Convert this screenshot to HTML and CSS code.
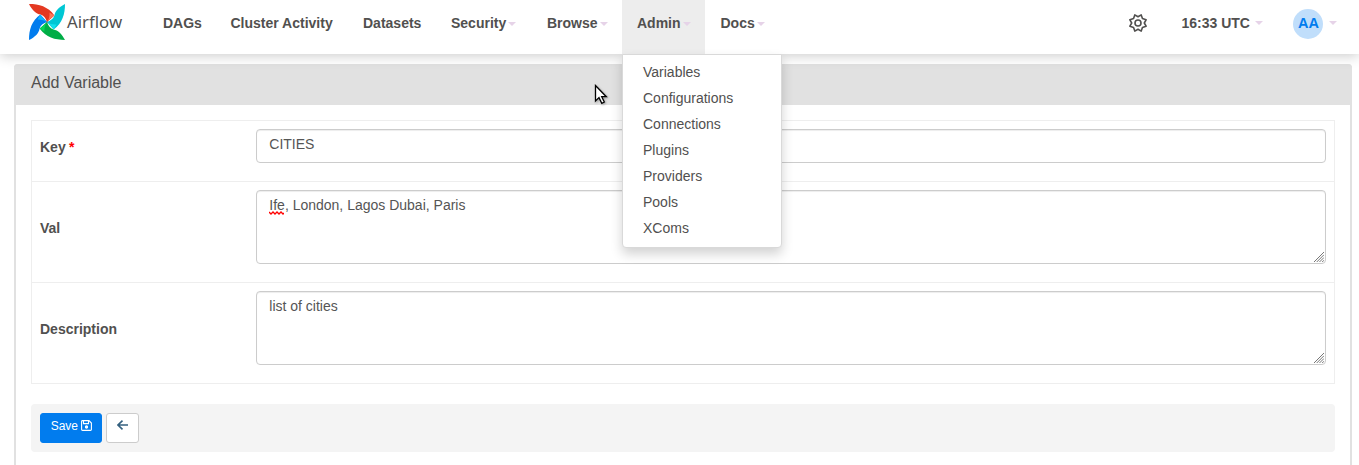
FILE: index.html
```html
<!DOCTYPE html>
<html lang="en">
<head>
<meta charset="utf-8">
<title>Airflow</title>
<link rel="stylesheet" href="styles.css">
</head>
<body>
<nav class="navbar">
  <a class="brand">
    <svg class="logo" viewBox="-18 -18 36 36">
      <path fill="#e43921" d="M-18-18C-8-18 1-15.500 7.400-6.600L0 0Q-2-6-6.400-7.400C-11-8-15-12-18-18Z"/>
      <path transform="rotate(90)" fill="#00c7d4" d="M-18-18C-8-18 1-15.500 7.400-6.600L0 0Q-2-6-6.400-7.400C-11-8-15-12-18-18Z"/>
      <path transform="rotate(180)" fill="#00ad46" d="M-18-18C-8-18 1-15.500 7.400-6.600L0 0Q-2-6-6.400-7.400C-11-8-15-12-18-18Z"/>
      <path transform="rotate(270)" fill="#017cee" d="M-18-18C-8-18 1-15.500 7.400-6.600L0 0Q-2-6-6.400-7.400C-11-8-15-12-18-18Z"/>
      <path fill="#ff7557" d="M0 0Q3-4 2.500-9.500L7.400-6.600Q3-4 0 0Z"/>
      <path transform="rotate(90)" fill="#11e1ee" d="M0 0Q3-4 2.500-9.500L7.400-6.600Q3-4 0 0Z"/>
      <path transform="rotate(180)" fill="#04d659" d="M0 0Q3-4 2.500-9.500L7.400-6.600Q3-4 0 0Z"/>
      <path transform="rotate(270)" fill="#0cb6ff" d="M0 0Q3-4 2.500-9.500L7.400-6.600Q3-4 0 0Z"/>
      <circle r=".7" fill="#51504f"/>
    </svg>
    <span class="brand-name">Airflow</span>
  </a>
  <a class="item dags">DAGs</a>
  <a class="item cluster">Cluster Activity</a>
  <a class="item datasets">Datasets</a>
  <a class="item security">Security<i class="caret"></i></a>
  <a class="item browse">Browse<i class="caret"></i></a>
  <div class="item admin">Admin<i class="caret"></i>
    <ul class="menu">
      <li>Variables</li><li>Configurations</li><li>Connections</li><li>Plugins</li><li>Providers</li><li>Pools</li><li>XComs</li>
    </ul>
  </div>
  <a class="item docs">Docs<i class="caret"></i></a>
  <div class="tools">
    <svg class="gear" viewBox="-9 -9 18 18" fill="none" stroke="#51504f" stroke-width="1.600" stroke-linejoin="round"><path d="M-3.200-8.100 0-6.300 3.200-8.100 4.450-4.450 8.100-3.200 6.300 0 8.100 3.200 4.450 4.450 3.200 8.100 0 6.300-3.200 8.100-4.450 4.450-8.100 3.200-6.300 0-8.100-3.200-4.450-4.450Z"/><circle r="3"/></svg>
    <span class="clock">16:33 UTC</span><i class="caret"></i>
    <span class="avatar">AA</span><i class="caret"></i>
  </div>
</nav>
<main class="panel">
  <h1 class="title">Add Variable</h1>
  <div class="content">
    <div class="form">
      <div class="row key"><label>Key <b class="required">*</b></label><div class="field">CITIES</div></div>
      <div class="row"><label>Val</label><div class="field area"><span class="misspelled">Ife<svg class="squiggle" viewBox="0 0 15 4"><path d="M0 1 2 3 4 1 6 3 8 1 10 3 12 1 14 3 15 2" fill="none" stroke="red" stroke-width="1.300"/></svg></span>, London, Lagos Dubai, Paris<svg class="grip" viewBox="0 0 11 11"><path d="M0 11 11 0M3 11 11 3M6 11 11 6M9 11 11 9" stroke="#777" stroke-width="1.100"/></svg></div></div>
      <div class="row"><label>Description</label><div class="field area">list of cities<svg class="grip" viewBox="0 0 11 11"><path d="M0 11 11 0M3 11 11 3M6 11 11 6M9 11 11 9" stroke="#777" stroke-width="1.100"/></svg></div></div>
    </div>
    <div class="actions">
      <button class="save">Save <svg class="disk" viewBox="0 0 11 11" fill="none" stroke="#fff" stroke-width="1.100"><path d="M1.500.600H8L10.400 3V9.500Q10.400 10.400 9.500 10.400H1.500Q.600 10.400.600 9.500V1.500Q.600.600 1.500.600ZM2.500.600V3.600H7.500V.600"/><circle cx="5.500" cy="7" r="1.100" fill="#fff"/></svg></button>
      <button class="back"><svg class="arrow" viewBox="0 0 11 10" fill="none" stroke="#34607f" stroke-width="1.600"><path d="M11 5H1M5.500.600 1 5 5.500 9.400"/></svg></button>
    </div>
  </div>
</main>
<svg class="pointer" viewBox="0 0 14 21"><path d="M1.500 1.500V17L5 13.600 7.800 19.300 10.300 18 7.700 12.700H12.300Z" fill="#fff" stroke="#000" stroke-width="1.300"/></svg>
</body>
</html>
```
FILE: styles.css
```css
* { box-sizing: border-box; }
body { margin: 0; height: 465px; overflow: hidden; background: #fff; color: #51504f; font: 14px/20px "Liberation Sans", Arial, sans-serif; }
.navbar { position: relative; z-index: 2; display: flex; height: 54px; background: #fff; box-shadow: 0 2px 12px rgba(0,0,0,.2); }
.brand { display: flex; flex: 0 0 148px; padding: 4px 0 0 29px; }
.logo { width: 36px; height: 36px; }
.brand-name { margin: 6px 0 0 2px; font: 16.800px/24px "Noto Sans", sans-serif; }
.item { position: relative; flex: none; padding: 13px 15px 0; font-weight: bold; white-space: nowrap; }
.dags { width: 67.500px; }
.cluster { width: 132.500px; }
.datasets { width: 88px; }
.security { width: 96px; }
.browse { width: 90px; }
.admin { width: 83px; background: #ededed; }
.docs { width: 76px; padding-left: 15.500px; }
.caret { display: inline-block; flex: none; margin-left: 2px; vertical-align: middle; border: 4px solid transparent; border-top-color: #e6d3e8; border-bottom: 0; }
.menu { position: absolute; top: 54px; left: 0; width: 160px; height: 194px; margin: 0; padding: 4px 0; list-style: none; background: #fff; border: 1px solid #d9d9d9; border-radius: 0 0 4px 4px; box-shadow: 0 6px 12px rgba(0,0,0,.18); font-weight: normal; }
.menu li { padding: 3px 20px; }
.tools { display: flex; align-items: center; height: 46px; margin-left: auto; padding-right: 22px; font-weight: bold; }
.gear { width: 18px; height: 18px; margin: 0 34.500px 1px 0; }
.clock { width: 67.500px; margin-right: 4px; white-space: nowrap; }
.avatar { width: 30px; height: 30px; margin: 2px 4px 0 30px; padding-left: 1px; border-radius: 50%; background: #c0defb; color: #017cee; font-size: 14.500px; line-height: 28px; text-align: center; }
.panel { height: 420px; margin: 10px 7px 0 14px; border: 2px solid #e1e1e1; border-top: 0; border-radius: 4px 4px 0 0; }
.title { height: 41px; margin: 0 -2px; padding: 9px 17px 0; border-radius: 4px 4px 0 0; background: #e1e1e1; font-size: 16px; font-weight: normal; }
.content { padding: 15px; }
.form { border: 1px solid #eee; }
.row { display: flex; height: 101px; padding: 8px 8px 0; border-bottom: 1px solid #eee; }
.row:last-child { height: 100px; border-bottom: 0; }
.row label { flex: 0 0 216px; padding-top: 28px; font-weight: bold; }
.row.key label { padding-top: 8px; }
.required { margin-left: -.5px; color: red; }
.field { position: relative; flex: 1; height: 34px; padding: 4px 12.300px; border: 1px solid #ccc; border-radius: 4px; box-shadow: inset 0 1px 1px rgba(0,0,0,.075); color: #555; }
.area { height: 74px; }
.row.key { height: 61px; }
.misspelled { position: relative; }
.squiggle { position: absolute; left: 0; top: 14px; width: 15px; height: 4px; }
.grip { position: absolute; right: 1px; bottom: 1px; width: 10px; height: 10px; }
.actions { display: flex; gap: 4px; height: 48px; margin-top: 20px; padding: 9px; border-radius: 4px; background: #f4f4f4; }
.save, .back { height: 30px; padding: 0 0 5px; border-radius: 3px; font: 12px/18px "Liberation Sans", Arial, sans-serif; }
.save { width: 62px; padding-left: 1px; border: 1px solid #017cee; background: #017cee; color: #fff; }
.disk { width: 11px; height: 11px; vertical-align: -1px; }
.back { width: 33px; border: 1px solid #ccc; background: #fff; }
.arrow { width: 11px; height: 10px; }
.pointer { position: absolute; z-index: 3; left: 594px; top: 84px; width: 14px; height: 21px; filter: drop-shadow(1px 1px 1px rgba(0,0,0,.3)); }
```
